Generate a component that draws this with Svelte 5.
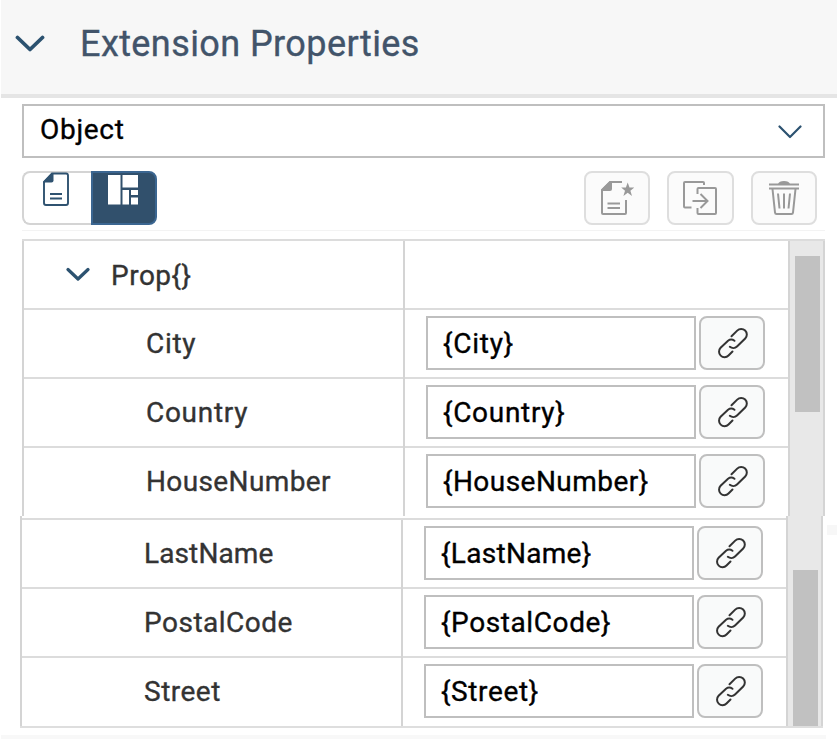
<script>
  const panels = [
    {
      id: 'upper',
      root: true,
      rows: [
        { name: 'City', track: 0.7, fieldTrack: 0.75 },
        { name: 'Country', track: 0.7, fieldTrack: 0.7 },
        { name: 'HouseNumber', track: 0.38, fieldTrack: 0.46 }
      ]
    },
    {
      id: 'lower',
      root: false,
      rows: [
        { name: 'LastName', track: 0.12, fieldTrack: 0.3 },
        { name: 'PostalCode', track: 0.5, fieldTrack: 0.6 },
        { name: 'Street', track: 0.5, fieldTrack: 0.62 }
      ]
    }
  ];
</script>

<main>
  <header>
    <svg class="chev" width="30" height="18" viewBox="0 0 30 18"><path d="M2.500 2.500 15 14.500 27.500 2.500" stroke-width="3.800" /></svg>
    <h1>Extension Properties</h1>
  </header>

  <div class="select">
    <span>Object</span>
    <svg class="chev" width="24" height="14" viewBox="0 0 24 14"><path d="M1.500 1.500 12 12 22.500 1.500" stroke-width="2.200" /></svg>
  </div>

  <div class="toolbar">
    <div class="seg">
      <button class="left" aria-label="Form">
        <svg width="28" height="36" viewBox="0 0 28 36">
          <path d="M10 1.500H24Q26 1.500 26 3.500V31Q26 33 24 33H4Q2 33 2 31V10Z" fill="none" stroke="#2f5270" stroke-width="1.900" />
          <path d="M10 1H11.500V8.500Q11.500 10.500 9.500 10.500H1.500V9.500Z" fill="#2f5270" />
          <path d="M8 22H20M8 26.500H20" stroke="#2f5270" stroke-width="2" />
        </svg>
      </button>
      <button class="right" aria-label="Table">
        <svg width="32" height="32" viewBox="0 0 32 32" fill="#fff">
          <path d="M1 1H13.500V30.500H1ZM15.500 1H31V13.500H15.500ZM15.500 16H22V30.500H15.500ZM24 16H31V21H24ZM24 23.500H31V30.500H24Z" />
        </svg>
      </button>
    </div>
    <div class="actions">
      <button aria-label="New">
        <svg width="34" height="36" viewBox="0 0 34 36">
          <path d="M22 2H10L2 10V33Q2 34 3 34H25Q26 34 26 33V20" fill="none" stroke="#999" stroke-width="2" />
          <path d="M10 1H12V9Q12 11 10 11H1V10Z" fill="#999" />
          <path d="M7.500 23.500H20M7.500 28H20" stroke="#999" stroke-width="2" />
          <path d="M27.700 2.500 29.500 7.500H34.200L30.400 10.700 32 16 27.700 12.800 23.400 16 25 10.700 21.200 7.500H25.900Z" fill="#999" />
        </svg>
      </button>
      <button aria-label="Import">
        <svg width="36" height="36" viewBox="0 0 36 36" fill="none" stroke="#999" stroke-width="2">
          <path d="M22 5V3Q22 2 21 2H3Q2 2 2 3V26.500Q2 27.500 3 27.500H9.500" />
          <path d="M15.500 14V9Q15.500 8 16.500 8H33Q34 8 34 9V33Q34 34 33 34H16.500Q15.500 34 15.500 33V28" />
          <path d="M10.500 21H25M18.500 14 25.500 21 18.500 28" />
        </svg>
      </button>
      <button aria-label="Delete">
        <svg width="32" height="36" viewBox="0 0 32 36" fill="none" stroke="#999" stroke-width="2">
          <path d="M10 4Q11 1 16 1T22 4Z" fill="#999" stroke="none" />
          <path d="M1 4.500H31M1 8.500H31" stroke-width="1.800" />
          <path d="M4.500 9 7 32.500Q7.200 34 8.500 34H23.500Q24.800 34 25 32.500L27.500 9M10 13.500 11.500 28.500M16 13.500V28.500M22 13.500 20.500 28.500" />
        </svg>
      </button>
    </div>
  </div>

  {#each panels as p (p.id)}
    <section class={p.id}>
      <div class="grid">
        {#if p.root}
          <div class="row">
            <div class="name root">
              <svg class="chev" width="24" height="16" viewBox="0 0 24 16"><path d="M2 2.500 12 12 22 2.500" stroke-width="3.200" /></svg>
              <span>Prop&#123;&#125;</span>
            </div>
            <div class="value"></div>
          </div>
        {/if}
        {#each p.rows as r (r.name)}
          <div class="row">
            <div class="name"><span style:letter-spacing="{r.track}px">{r.name}</span></div>
            <div class="value">
              <div class="field" style:letter-spacing="{r.fieldTrack}px">{'{' + r.name + '}'}</div>
              <button class="link" aria-label="Bind">
                <svg width="32" height="32" viewBox="0 0 32 32" fill="none" stroke="#333" stroke-width="2" stroke-linecap="round">
                  <path d="M14.500 9.200 20.200 3.600A5.500 5.500 0 0 1 28.200 11.500L20 19.500A5.500 5.500 0 0 1 12.800 19.800" />
                  <path d="M17.500 13.800A5.500 5.500 0 0 0 11 13.700L3.600 20.800A5.500 5.500 0 0 0 11.500 28.500L15.500 24.500" />
                </svg>
              </button>
            </div>
          </div>
        {/each}
      </div>
      <div class="track"><div class="thumb"></div></div>
    </section>
  {/each}
  <footer></footer>
  <i class="mark"></i>
</main>

<style>
  :global(body) { background: #fff; overflow: hidden; }
  main {
    position: relative;
    width: 837px; height: 739px; box-sizing: border-box;
    display: flex; flex-direction: column;
    font: 28px/1 Roboto, sans-serif; color: #333; background: #fff;
    -webkit-text-stroke: 0.35px currentColor;
  }
  svg { display: block; flex: none; }
  .chev path { fill: none; stroke: #2c5270; stroke-linecap: round; stroke-linejoin: round; }
  button { font: inherit; margin: 0; padding: 0; box-sizing: border-box; display: flex; align-items: center; justify-content: center; }
  header {
    height: 94px; flex: none; margin-left: 1px; background: #f7f7f7; border-bottom: 4px solid #e5e5e5;
    display: flex; align-items: flex-start;
  }
  header svg { margin: 35px 0 0 14px; }
  h1 { margin: 0 0 0 35px; font-size: 36px; font-weight: 400; line-height: 89px; letter-spacing: 0.42px; color: #42546a; white-space: nowrap; }
  .select {
    height: 54px; flex: none; box-sizing: border-box; margin: 6px 12px 0 22px; border: 2px solid #bfbfbf;
    padding: 0 21px 0 16px; display: flex; align-items: center; justify-content: space-between; color: #000;
  }
  .select span { margin-top: -2px; letter-spacing: 0.7px; }
  .select svg { margin-top: 2px; }
  .toolbar {
    flex: none; height: 73px; box-sizing: border-box; margin: 0 12px 0 22px; padding-top: 13px;
    display: flex; justify-content: space-between; align-items: flex-start; border-bottom: 1px solid #f3f3f3;
  }
  .seg { display: flex; }
  .seg button { height: 54px; align-items: flex-start; }
  .left { width: 68.500px; background: #fff; border: 2px solid #d4d4d4; border-right: 0; border-radius: 8px 0 0 8px; }
  .left svg { margin: -1px 3px 0 0; }
  .right { width: 66.500px; background: #31506c; border: 2px solid #3b6691; border-radius: 0 8px 8px 0; }
  .right svg { margin: 1px 1px 0 0; }
  .actions { display: flex; gap: 17px; padding-right: 8px; }
  .actions button { width: 66.500px; height: 54px; background: #fbfbfb; border: 2px solid #dedede; border-radius: 8px; }
  section { flex: none; display: flex; box-sizing: border-box; }
  .upper { height: 277px; margin: 8px 12px 0 22px; border-top: 2px solid #dcdcdc; overflow: hidden; }
  .lower { height: 212px; margin: 0 14px 0 20px; border-bottom: 2px solid #dedede; overflow: hidden; }
  .grid { width: 766px; flex: none; box-sizing: border-box; border-left: 2px solid #d4d4d4; }
  .lower .grid { padding-top: 2px; }
  .row { height: 69px; box-sizing: border-box; display: flex; border-bottom: 2px solid #dcdcdc; }
  .row:last-child { border-bottom-color: transparent; }
  .lower .row:first-child { height: 71px; border-top: 2px solid #dcdcdc; }
  .name { width: 381px; height: 69px; box-sizing: border-box; flex: none; border-right: 2px solid #d4d4d4; padding: 0 0 2px 122px; display: flex; align-items: center; white-space: nowrap; }
  .root { padding: 0 0 0 42px; }
  .root svg { margin-top: -2px; }
  .root span { margin-left: 21px; letter-spacing: 0.5px; }
  .value { flex: 1; height: 66px; padding-left: 21px; display: flex; align-items: center; }
  .field { width: 270px; height: 54px; box-sizing: border-box; border: 2px solid #bfbfbf; padding-left: 15px; line-height: 51px; color: #000; white-space: nowrap; background: #fff; }
  .link { width: 66px; height: 54px; margin-left: 3px; background: #f9fafa; border: 2px solid #bfbfbf; border-radius: 8px; }
  .link svg { margin-left: 2px; }
  .track { flex: 1; border-left: 2px solid #d4d4d4; border-right: 2px solid #d4d4d4; background: #e8e8e8; }
  .thumb { width: 25px; height: 156px; margin: 15px 0 0 4.500px; background: #c1c1c1; }
  .lower .thumb { margin-top: 54px; }
  footer { height: 4px; flex: none; margin: 7px 11px 0 1px; background: #f8f8f8; }
  .mark { position: absolute; left: 827px; top: 525px; width: 10px; height: 10px; background: #f7f7f7; }
</style>
